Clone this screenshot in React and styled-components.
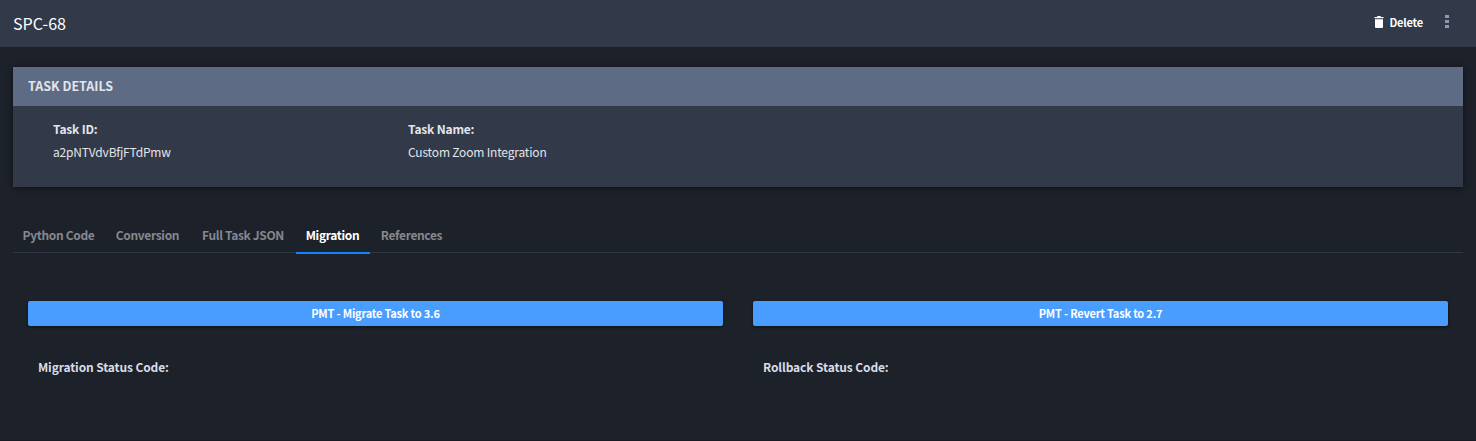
import React from "react";
import styled, { createGlobalStyle } from "styled-components";

const GlobalStyle = createGlobalStyle`
  * { box-sizing: border-box; }
  body {
    margin: 0;
    background: #1d2129;
    font-family: "Source Sans Pro", "Noto Sans CJK SC", "Noto Sans", sans-serif;
    font-size: 12.5px;
    color: #e3e5ea;
  }
`;

const Page = styled.div`
  height: 441px;
  overflow: hidden;
  border-bottom: 1px solid #181b24;
`;

const Header = styled.header`
  display: flex;
  align-items: center;
  justify-content: space-between;
  height: 47px;
  padding: 0 27px 0 13px;
  background: #323948;
`;

const Title = styled.h1`
  margin: 0 0 1px;
  font-size: 16.1px;
  line-height: 24px;
  font-weight: 400;
  color: #fff;
`;

const Actions = styled.div`
  display: flex;
  align-items: center;
  height: 20px;
  margin-bottom: 4px;
`;

const DeleteButton = styled.button`
  display: flex;
  align-items: center;
  gap: 5px;
  padding: 0;
  border: 0;
  background: none;
  color: #fff;
  font: 700 11px/20px "Source Sans Pro", "Noto Sans CJK SC", sans-serif;
  letter-spacing: -0.2px;
`;

const MenuButton = styled.button`
  display: flex;
  flex-direction: column;
  gap: 2px;
  margin-left: 22px;
  padding: 0;
  border: 0;
  background: none;
`;

const Dot = styled.i`
  width: 4px;
  height: 3px;
  background: #8e99ae;
`;

const Main = styled.main`
  padding: 20px 13px 0;
`;

const Card = styled.section`
  height: 120px;
  background: #323948;
  box-shadow: 0 1px 6px rgba(0, 0, 0, 0.5);
`;

const CardTitle = styled.h2`
  margin: 0;
  height: 39px;
  padding-left: 15px;
  background: #5d6b85;
  font-size: 12.5px;
  line-height: 37px;
  font-weight: 700;
`;

const Fields = styled.dl`
  display: grid;
  grid-template-columns: 355px 1fr;
  margin: 0;
  padding: 11px 40px 0;
`;

const Label = styled.dt`
  height: 23px;
  font-weight: 700;
  font-size: 12px;
  line-height: 23px;
  letter-spacing: -0.18px;
`;

const Value = styled.dd`
  margin: 0;
  line-height: 23px;
  font-size: 12px;
  letter-spacing: -0.18px;
`;

const Tabs = styled.nav`
  display: flex;
  height: 36px;
  margin-top: 30px;
  border-bottom: 1px solid #303644;
`;

const Tab = styled.button`
  height: 37px;
  width: ${(p) => p.$width}px;
  margin: 0;
  padding: 0 1px 0 0;
  border: 0;
  border-bottom: 2px solid ${(p) => (p.$active ? "#1683fc" : "transparent")};
  background: none;
  color: ${(p) => (p.$active ? "#fff" : "#85888e")};
  font: 700 12px/35px "Source Sans Pro", "Noto Sans CJK SC", sans-serif;
  letter-spacing: -0.35px;
  white-space: nowrap;
`;

const Panels = styled.div`
  display: grid;
  grid-template-columns: 1fr 1fr;
  gap: 30px;
  padding: 48px 15px 0;
`;

const ActionButton = styled.button`
  display: block;
  width: 100%;
  height: 25px;
  padding: 0;
  border: 0;
  border-radius: 2px;
  background: #489dff;
  box-shadow: 0 1px 3px rgba(0, 0, 0, 0.5);
  color: #fff;
  font: 700 11px/25px "Source Sans Pro", "Noto Sans CJK SC", sans-serif;
  letter-spacing: -0.2px;
`;

const Status = styled.div`
  padding: 31px 10px 0;
  font-size: 12px;
  line-height: 20px;
  font-weight: 700;
  letter-spacing: -0.12px;
  color: #d8dce6;
`;

const TrashIcon = () => (
  <svg width="10" height="12" viewBox="0 0 10 12" fill="currentColor">
    <path d="M3.5 0h3l.5 1h2.5v1.3h-9V1H3zM1 3.2h8V11a1 1 0 0 1-1 1H2a1 1 0 0 1-1-1z" />
  </svg>
);

const tabs = [
  { name: "Python Code", width: 92 },
  { name: "Conversion", width: 86 },
  { name: "Full Task JSON", width: 105 },
  { name: "Migration", width: 74 },
  { name: "References", width: 84 },
];

export default function App() {
  return (
    <Page>
      <GlobalStyle />
      <Header>
        <Title>SPC-68</Title>
        <Actions>
          <DeleteButton><TrashIcon />Delete</DeleteButton>
          <MenuButton aria-label="More"><Dot /><Dot /><Dot /></MenuButton>
        </Actions>
      </Header>
      <Main>
        <Card>
          <CardTitle>TASK DETAILS</CardTitle>
          <Fields>
            <div>
              <Label>Task ID:</Label>
              <Value>a2pNTVdvBfjFTdPmw</Value>
            </div>
            <div>
              <Label>Task Name:</Label>
              <Value>Custom Zoom Integration</Value>
            </div>
          </Fields>
        </Card>
        <Tabs>
          {tabs.map((t) => (
            <Tab key={t.name} $width={t.width} $active={t.name === "Migration"}>{t.name}</Tab>
          ))}
        </Tabs>
        <Panels>
          <div>
            <ActionButton>PMT - Migrate Task to 3.6</ActionButton>
            <Status>Migration Status Code:</Status>
          </div>
          <div>
            <ActionButton>PMT - Revert Task to 2.7</ActionButton>
            <Status>Rollback Status Code:</Status>
          </div>
        </Panels>
      </Main>
    </Page>
  );
}
